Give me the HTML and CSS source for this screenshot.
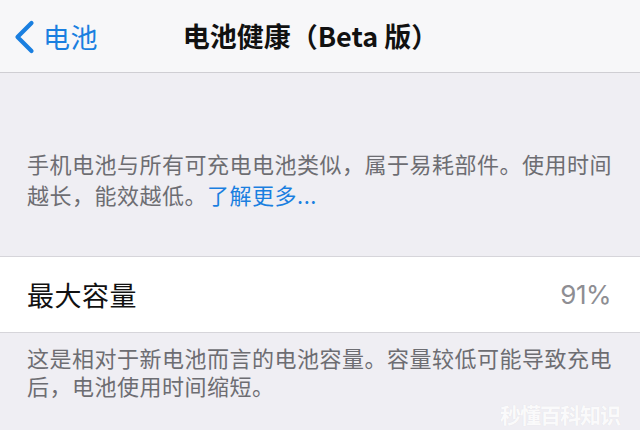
FILE: index.html
```html
<!DOCTYPE html>
<html lang="zh-CN">
<head>
<meta charset="utf-8">
<title>电池健康（Beta 版）</title>
<link rel="stylesheet" href="styles.css">
</head>
<body>
<div class="screen">
  <header class="nav">
    <a class="back" href="#">
      <svg class="chev" width="22" height="34" viewBox="0 0 22 34"><path d="M18.5 3 L4.5 17 L18.5 31" fill="none" stroke="#1a7fe0" stroke-width="4.2" stroke-linecap="round" stroke-linejoin="round"/></svg>
      <span class="back-label">电池</span>
    </a>
    <h1 class="title">电池健康（Beta 版）</h1>
    <span class="spacer"></span>
  </header>
  <p class="note intro">手机电池与所有可充电电池类似，属于易耗部件。使用时间越长，能效越低。<a class="link" href="#">了解更多...</a></p>
  <div class="cell">
    <span class="cell-label">最大容量</span>
    <span class="cell-value">91%</span>
  </div>
  <p class="note footer">这是相对于新电池而言的电池容量。容量较低可能导致充电后，电池使用时间缩短。</p>
  <div class="watermark">秒懂百科知识</div>
</div>
</body>
</html>
```
FILE: styles.css
```css
html, body {
  margin: 0;
  padding: 0;
}
body {
  width: 640px;
  height: 430px;
  overflow: hidden;
  background: #efeef3;
  font-family: "Noto Sans CJK SC", "Noto Sans", sans-serif;
}
.screen {
  position: relative;
  height: 430px;
  display: flex;
  flex-direction: column;
}
.nav {
  height: 73px;
  box-sizing: border-box;
  background: #f7f7f9;
  border-bottom: 1px solid #cfced3;
  display: grid;
  grid-template-columns: 1fr auto 1fr;
  align-items: center;
  padding: 0 12px 0 13px;
}
.back {
  display: flex;
  align-items: center;
  gap: 8px;
  text-decoration: none;
  color: #1a7fe0;
  margin-top: 2px;
}
.chev {
  display: block;
}
.back-label {
  font-size: 27px;
  line-height: 32px;
  letter-spacing: 0.5px;
}
.title {
  margin: 0;
  font-size: 27px;
  font-weight: 700;
  color: #111;
  line-height: 32px;
  margin-left: -20px;
}
.note {
  margin: 0;
  padding: 0 27px;
  font-size: 22px;
  letter-spacing: 0.5px;
  color: #6d6d72;
}
.intro {
  margin-top: 75px;
  line-height: 31px;
}
.link {
  color: #1a7fe0;
  text-decoration: none;
}
.cell {
  margin-top: 46px;
  height: 77px;
  box-sizing: border-box;
  background: #fff;
  border-top: 1px solid #d6d5da;
  border-bottom: 1px solid #d6d5da;
  display: flex;
  align-items: center;
  justify-content: space-between;
  padding: 0 29px 0 27px;
}
.cell-label {
  font-size: 27px;
  color: #111;
  letter-spacing: 0.5px;
}
.cell-value {
  font-family: "Inter", "Liberation Sans", sans-serif;
  font-size: 26px;
  color: #8e8e93;
  letter-spacing: -0.5px;
}
.footer {
  margin-top: 10px;
  padding-right: 20px;
  line-height: 28px;
}
.watermark {
  position: absolute;
  right: 20px;
  bottom: 4px;
  font-size: 21px;
  line-height: 24px;
  font-weight: 700;
  color: rgba(255, 255, 255, 0.9);
  text-shadow: 0 0 1px rgba(0, 0, 0, 0.08);
  letter-spacing: -1px;
}
```
